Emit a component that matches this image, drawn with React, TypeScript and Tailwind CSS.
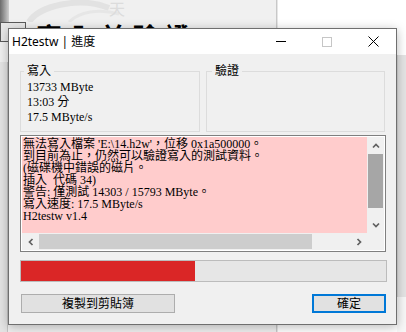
import React from "react";

type Dir = "up" | "down" | "left" | "right";
const Chev = ({ dir }: { dir: Dir }) => {
  const paths: Record<Dir, string> = {
    up: "M1 5.5 L4 2.5 L7 5.5",
    down: "M1 2.5 L4 5.5 L7 2.5",
    left: "M5.5 1 L2.5 4 L5.5 7",
    right: "M2.5 1 L5.5 4 L2.5 7",
  };
  return (
    <svg width="8" height="8" viewBox="0 0 8 8">
      <path d={paths[dir]} fill="none" stroke="#606060" strokeWidth="1.7" />
    </svg>
  );
};

const lines = [
  "無法寫入檔案 'E:\\14.h2w'，位移 0x1a500000。",
  "到目前為止，仍然可以驗證寫入的測試資料。",
  "(磁碟機中錯誤的磁片。",
  "插入  代碼 34)",
  "警告: 僅測試 14303 / 15793 MByte。",
  "寫入速度: 17.5 MByte/s",
  "H2testw v1.4",
];

export default function App() {
  return (
    <div className="relative w-[406px] h-[332px] overflow-hidden bg-white font-['Liberation_Serif','Noto_Sans_CJK_TC',serif] text-[12px] text-black">
      {/* background main window */}
      <div className="flex h-[332px]">
        <div className="w-[276px] h-[332px] bg-[#f0f0f0] flex flex-col">
          <div className="h-[22px] shrink-0 flex">
            <div className="w-[9px] h-[22px] bg-gradient-to-r from-[#6c6c6c] to-[#cfcfcf]" />
            <div className="flex-1 relative">
              <svg width="267" height="22" viewBox="0 0 267 22" className="absolute left-0 top-0">
                <path d="M20 22 C 30 6, 70 -4, 100 8" fill="none" stroke="#e2e2e2" strokeWidth="6" />
                <path d="M60 22 C 70 12, 90 8, 110 14" fill="none" stroke="#e6e6e6" strokeWidth="3" />
              </svg>
              <span className="absolute left-[100px] top-[2px] text-[16px] leading-none text-[#dcdcdc]">天</span>
            </div>
          </div>
          <div className="h-[40px] shrink-0 flex items-start">
            <div className="w-[26px] h-[20px] border border-[#5a5a5a] bg-[#e8e8e8]" />
            <div className="ml-[10px] mt-[1px] text-[26px] leading-[26px] font-bold font-['Noto_Sans_CJK_TC',sans-serif] tracking-[6px]">寫入並驗證</div>
          </div>
          <div className="flex-1 flex">
            <div className="w-[8px] bg-[#e4e4e4] border-r border-[#c4c4c4]" />
            <div className="flex-1" />
          </div>
        </div>
        <div className="w-[1px] h-full bg-[#c8c8c8]" />
        <div className="w-[1px] h-full bg-[#e6e6e6]" />
        <div className="flex-1 flex">
          <div className="flex-1 bg-white" />
          <div className="w-[9px] flex flex-col">
            <div className="h-[55px] shrink-0 bg-white" />
            <div className="h-[242px] shrink-0 bg-[#e4e4e4] border-l border-[#d4d4d4]" />
            <div className="flex-1 bg-[#f7f7f7]" />
          </div>
        </div>
      </div>

      {/* dialog window */}
      <div className="absolute left-[8px] top-[28px] w-[389px] h-[297px] border border-[#6f6f6f] bg-[#f0f0f0] flex flex-col shadow-[0_2px_10px_rgba(0,0,0,0.28)]">
        {/* title bar */}
        <div className="h-[25px] shrink-0 bg-white flex items-center">
          <div className="flex-1 pl-[3px] font-['Noto_Sans','Noto_Sans_CJK_TC',sans-serif] text-[12px] leading-none">
            H2testw | 進度
          </div>
          <div className="w-[46px] h-full flex items-center justify-center">
            <div className="w-[10px] h-[1px] bg-black" />
          </div>
          <div className="w-[46px] h-full flex items-center justify-center">
            <div className="w-[10px] h-[10px] border border-[#c6c6c6]" />
          </div>
          <div className="w-[46px] h-full flex items-center justify-center">
            <svg width="11" height="11" viewBox="0 0 11 11">
              <path d="M0.5 0.5 L10.5 10.5 M10.5 0.5 L0.5 10.5" stroke="#000" strokeWidth="1" />
            </svg>
          </div>
        </div>

        {/* body */}
        <div className="flex-1 flex flex-col px-[11px] pt-[17px]">
          <div className="flex gap-[6px]">
            <div className="relative w-[180px] h-[61px] border border-[#dcdcdc] pl-[6px] pt-[8px] leading-[15px]">
              <span className="absolute left-[3px] top-[-7px] px-[3px] bg-[#f0f0f0] leading-[12px]">寫入</span>
              <div>13733 MByte</div>
              <div>13:03 分</div>
              <div>17.5 MByte/s</div>
            </div>
            <div className="relative w-[179px] h-[61px] border border-[#dcdcdc]">
              <span className="absolute left-[5px] top-[-7px] px-[3px] bg-[#f0f0f0] leading-[12px]">驗證</span>
            </div>
          </div>

          {/* text box */}
          <div className="mt-[3px] w-[366px] border border-[#7f7f7f] bg-white p-[1px]">
            <div className="grid grid-cols-[345px_17px] grid-rows-[96px_17px]">
              <div className="bg-[#ffcccc] pl-[1px] pt-[1px] leading-[12px] whitespace-pre overflow-hidden">
                {lines.map((l, i) => (
                  <div key={i}>{l}</div>
                ))}
              </div>
              <div className="bg-[#f0f0f0] flex flex-col">
                <div className="h-[17px] flex items-center justify-center">
                  <Chev dir="up" />
                </div>
                <div className="mx-[1px] h-[54px] bg-[#a6a6a6]" />
                <div className="flex-1" />
                <div className="h-[17px] flex items-center justify-center">
                  <Chev dir="down" />
                </div>
              </div>
              <div className="bg-[#f0f0f0] flex">
                <div className="w-[17px] flex items-center justify-center">
                  <Chev dir="left" />
                </div>
                <div className="flex-1 flex py-[1px]">
                  <div className="w-[273px] bg-[#cdcdcd]" />
                </div>
                <div className="w-[17px] flex items-center justify-center">
                  <Chev dir="right" />
                </div>
              </div>
              <div className="bg-[#f0f0f0]" />
            </div>
          </div>

          {/* progress */}
          <div className="mt-[8px] w-[367px] h-[22px] border border-[#bcbcbc] bg-[#e6e6e6] flex">
            <div className="w-[174px] h-full bg-[#da2626]" />
          </div>

          {/* buttons */}
          <div className="mt-[12px] w-[366px] flex justify-between">
            <div className="ml-[1px] w-[154px] h-[19px] border border-[#adadad] bg-[#e1e1e1] flex items-center justify-center leading-none">
              複製到剪貼簿
            </div>
            <div className="w-[74px] h-[19px] border-2 border-[#0078d7] bg-[#e1e1e1] flex items-center justify-center leading-none">
              確定
            </div>
          </div>
        </div>
      </div>
    </div>
  );
}
